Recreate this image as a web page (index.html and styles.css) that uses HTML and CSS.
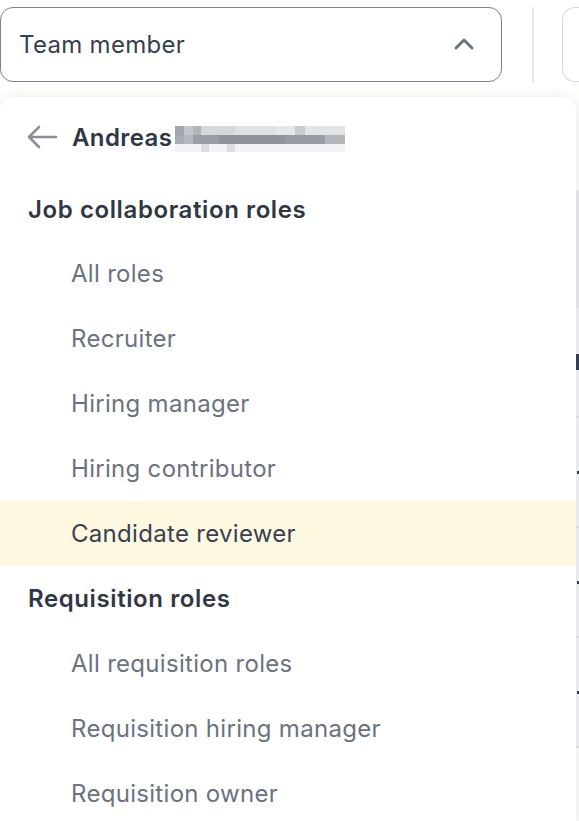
FILE: index.html
```html
<!DOCTYPE html>
<html lang="en">
<head>
<meta charset="utf-8">
<title>Team member filter</title>
<link rel="stylesheet" href="styles.css">
</head>
<body>
<div class="page">
  <div class="toolbar">
    <div class="select">
      <span class="select-label">Team member</span>
      <svg class="chevron" width="20" height="14" viewBox="0 0 20 14"><path d="M2 11 L10 3 L18 11" fill="none" stroke="#6b7280" stroke-width="3" stroke-linecap="round" stroke-linejoin="round"/></svg>
    </div>
    <div class="divider"></div>
    <div class="select-ghost"></div>
  </div>
  <div class="table">
    <div class="thead"></div>
    <div class="trow"><span class="glyph tall"></span></div>
    <div class="trow"><span class="glyph"></span></div>
    <div class="trow"><span class="glyph"></span></div>
    <div class="trow"><span class="glyph"></span></div>
  </div>

  <div class="menu">
    <div class="back-row">
      <svg class="back-arrow" width="32" height="26" viewBox="0 0 32 26"><path d="M30 13 H3 M13 3 L3 13 L13 23" fill="none" stroke="#8a8f9c" stroke-width="2.6" stroke-linecap="round" stroke-linejoin="round"/></svg>
      <span class="person">Andreas</span>
      <span class="blur"></span>
    </div>
    <div class="group-title first">Job collaboration roles</div>
    <div class="item">All roles</div>
    <div class="item">Recruiter</div>
    <div class="item">Hiring manager</div>
    <div class="item">Hiring contributor</div>
    <div class="item active">Candidate reviewer</div>
    <div class="group-title">Requisition roles</div>
    <div class="item">All requisition roles</div>
    <div class="item">Requisition hiring manager</div>
    <div class="item">Requisition owner</div>
  </div>
</div>
</body>
</html>
```

FILE: styles.css
```css
* { box-sizing: border-box; }
html, body { margin: 0; padding: 0; }
body {
  font-family: Inter, "Noto Sans", "Liberation Sans", sans-serif;
  background: #ffffff;
  color: #374151;
  width: 579px;
  height: 821px;
  overflow: hidden;
}
.page { position: relative; width: 579px; height: 821px; overflow: hidden; }

.toolbar {
  display: flex;
  align-items: center;
  padding-top: 7px;
  height: 81px;
}
.select {
  flex: 0 0 502px;
  height: 75px;
  border: 1.4px solid #7d828c;
  border-radius: 13px;
  display: flex;
  align-items: center;
  justify-content: space-between;
  padding: 0 27px 0 18px;
}
.select-label {
  font-size: 24px;
  letter-spacing: 0.3px;
  color: #374151;
}
.chevron { display: block; }
.divider {
  flex: 0 0 2px;
  height: 75px;
  background: #e8eaee;
  margin-left: 30px;
}
.select-ghost {
  flex: 0 0 40px;
  height: 75px;
  margin-left: 28px;
  border: 1.4px solid #d4d8e4;
  border-right: none;
  border-radius: 13px 0 0 13px;
}

.table { margin-top: 109px; }
.thead {
  height: 118px;
  background: #eaecef;
}
.trow {
  height: 110px;
  border-bottom: 2px solid #e3e5e9;
  display: flex;
  justify-content: flex-end;
  align-items: center;
  background: #f4f5f7;
}
.glyph {
  width: 2px;
  height: 3px;
  background: #374151;
}
.glyph.tall { height: 16px; width: 3px; }

.menu {
  position: absolute;
  left: 0;
  top: 97px;
  width: 576px;
  height: 740px;
  background: #ffffff;
  border-radius: 14px;
  box-shadow: 0 2px 14px rgba(30, 40, 60, 0.12);
  overflow: hidden;
}
.back-row {
  height: 80px;
  display: flex;
  align-items: center;
  padding-left: 26px;
}
.back-arrow { display: block; margin-right: 14px; }
.person {
  font-size: 24px;
  letter-spacing: 0.4px;
  font-weight: 600;
  color: #2f3744;
}
.blur {
  display: block;
  width: 170px;
  height: 26px;
  margin-left: 3px;
  margin-top: 4px;
  background:
    linear-gradient(90deg, #a3a6ad 0 9px, #c4c6cb 9px 18px, #b0b3b9 18px 26px, #d6d8dc 26px 60px, #dfe1e4 60px 100px, #e6e7ea 100px 120px, #c9cbd0 120px 130px, #e3e4e7 130px 170px) top / 170px 9px no-repeat,
    linear-gradient(90deg, #a9acb2 0 9px, #b5b8bd 9px 18px, #9a9ea6 18px 44px, #8f949c 44px 110px, #989ca4 110px 150px, #b3b6bb 150px 170px) 0 9px / 170px 9px no-repeat,
    linear-gradient(90deg, #f2f3f5 0 26px, #dcdee1 26px 34px, #f2f3f5 34px 52px, #dcdee1 52px 60px, #f2f3f5 60px 170px) 0 18px / 170px 8px no-repeat;
}
.group-title {
  height: 65px;
  display: flex;
  align-items: center;
  padding-left: 28px;
  font-size: 24px;
  letter-spacing: 0.6px;
  font-weight: 600;
  color: #2f3744;
}
.group-title.first { height: 64px; }
.item {
  height: 65px;
  display: flex;
  align-items: center;
  padding-left: 71px;
  font-size: 24px;
  letter-spacing: 0.3px;
  color: #6b7280;
}
.item.active {
  background: #fff8e1;
  color: #374151;
}
```
